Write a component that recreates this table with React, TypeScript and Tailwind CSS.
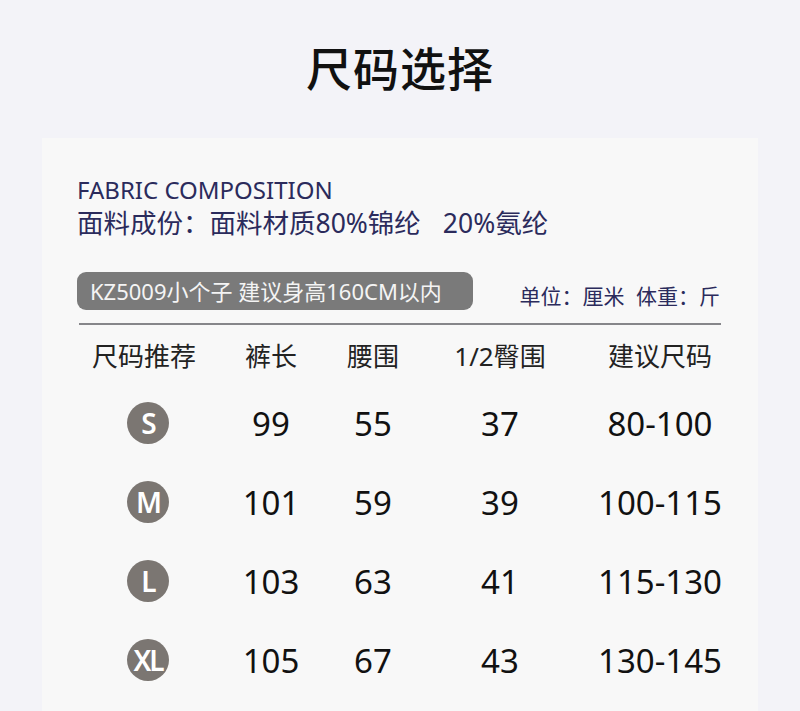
const font = { fontFamily: '"Noto Sans", "Noto Sans CJK SC", sans-serif' }

type SizeRow = {
  size: string
  length: string
  waist: string
  hip: string
  weight: string
}

const rows: SizeRow[] = [
  { size: 'S', length: '99', waist: '55', hip: '37', weight: '80-100' },
  { size: 'M', length: '101', waist: '59', hip: '39', weight: '100-115' },
  { size: 'L', length: '103', waist: '63', hip: '41', weight: '115-130' },
  { size: 'XL', length: '105', waist: '67', hip: '43', weight: '130-145' },
]

const gridCols = 'grid grid-cols-[142px_104px_100px_154px_166px] items-center text-center'

function SizeBadge({ size }: { size: string }) {
  return (
    <div className="mx-auto flex h-[42px] w-[42px] items-center justify-center rounded-full bg-[#7b7672] pb-[1px] text-[28px] font-semibold leading-none tracking-[-2px] text-white">
      {size}
    </div>
  )
}

export default function App() {
  return (
    <div className="h-[711px] w-[800px] overflow-hidden bg-[#f3f3f8] text-[#1a1a1a]" style={font}>
      <div className="flex h-[138px] items-center justify-center pb-[2px]">
        <h1 className="text-[46px] font-medium leading-none tracking-[1px] text-[#111]">尺码选择</h1>
      </div>

      <div className="mx-[42px] h-[573px] bg-[#f8f8f8] px-[35px] pt-[36px]">
        <p className="text-[24px] leading-[32px] text-[#2b2b5c]">FABRIC COMPOSITION</p>
        <p className="text-[26.5px] leading-[34px] text-[#2b2b5c]">
          面料成份：面料材质80%锦纶<span className="inline-block w-[22px]" />20%氨纶
        </p>

        <div className="mt-[32px] flex items-end justify-between pr-[3px]">
          <div className="flex h-[38px] w-[396px] items-center rounded-[9px] bg-[#7a7a7a] pl-[13px] text-[22px] text-[#f4f4f4]">
            KZ5009小个子 建议身高160CM以内
          </div>
          <div className="pb-[3px] text-[21px] leading-none text-[#2b2b5c] [word-spacing:6px]">单位：厘米 体重：斤</div>
        </div>
        <div className="mx-[2px] mt-[13px] h-[2px] bg-[#86868a]" />

        <div className={`${gridCols} mt-[15px] h-[32px] text-[26px] leading-none text-[#222]`}>
          <div className="pr-[8px]">尺码推荐</div>
          <div>裤长</div>
          <div>腰围</div>
          <div>1/2臀围</div>
          <div>建议尺码</div>
        </div>

        <div className="mt-[30px] flex flex-col gap-[37px]">
          {rows.map((row) => (
            <div key={row.size} className={`${gridCols} h-[42px] text-[33px] leading-none text-[#111]`}>
              <SizeBadge size={row.size} />
              <div>{row.length}</div>
              <div>{row.waist}</div>
              <div>{row.hip}</div>
              <div>{row.weight}</div>
            </div>
          ))}
        </div>
      </div>
    </div>
  )
}
